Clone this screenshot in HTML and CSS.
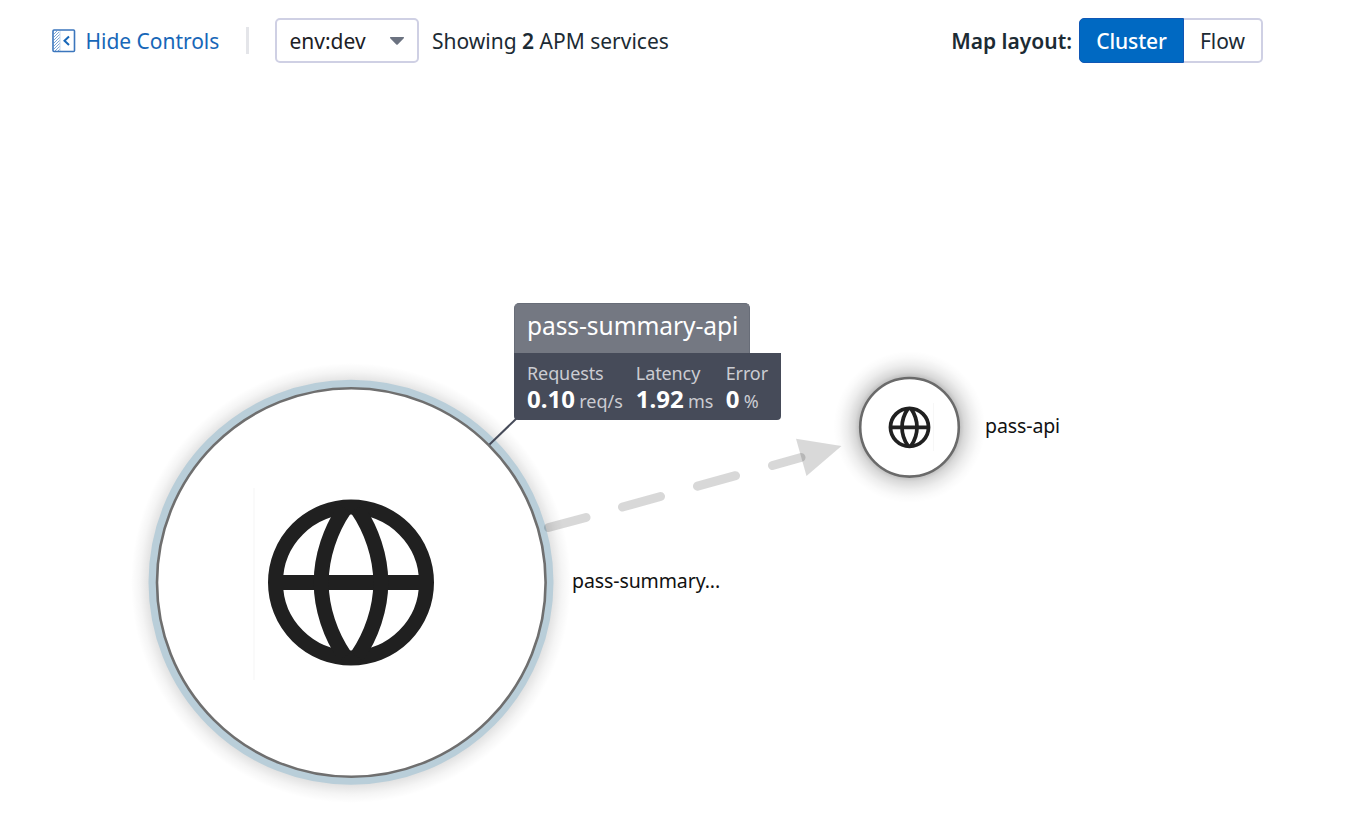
FILE: index.html
```html
<!DOCTYPE html>
<html lang="en">
<head>
<meta charset="utf-8">
<title>Service Map</title>
<link rel="stylesheet" href="styles.css">
</head>
<body>
<header class="toolbar">
  <a class="hide-controls">
    <svg class="panel-icon" width="24" height="24" viewBox="0 0 24 24" fill="none" stroke="#3b76bd">
      <path d="M2 5L5 2M2 8L7 3M2 11L7.500 5.500M2 14L7.500 8.500M2 17L7.500 11.500M2 20L7.500 14.500M3 22L7.500 17.500M6 22L7.500 20.500" stroke-width="1" opacity=".65"/>
      <rect x="1" y="1" width="21.500" height="21.500" rx="1" stroke-width="1.600"/>
      <path d="M8 1.500V22" stroke-width="1" opacity=".3"/>
      <path d="M17 7.500L12.500 11.800L17 16" stroke="#1767b8" stroke-width="2"/>
    </svg>
    <span class="hide-label">Hide Controls</span>
  </a>
  <span class="divider"></span>
  <div class="env-select"><span>env:dev</span><svg width="16" height="10" viewBox="0 0 16 10"><path d="M1.500 1H14.500Q15.500 1.500 14.800 2.200L8.700 8.500Q8 9 7.300 8.500L1.200 2.200Q.5 1.500 1.500 1Z" fill="#6b7280"/></svg></div>
  <span class="summary">Showing <b>2</b> APM services</span>
  <div class="layout-control">
    <span class="layout-label">Map layout:</span>
    <div class="toggle"><span class="option active">Cluster</span><span class="option flow">Flow</span></div>
  </div>
</header>
<main class="map">
  <svg class="graph" width="1362" height="737" viewBox="0 81 1362 737">
    <defs>
      <radialGradient id="bigShadow" gradientUnits="userSpaceOnUse" cx="351" cy="583" r="220">
        <stop offset=".87" stop-color="#000" stop-opacity=".18"/>
        <stop offset=".92" stop-color="#000" stop-opacity=".11"/>
        <stop offset=".96" stop-color="#000" stop-opacity=".04"/>
        <stop offset="1" stop-color="#000" stop-opacity="0"/>
      </radialGradient>
      <radialGradient id="smallShadow" gradientUnits="userSpaceOnUse" cx="909.500" cy="427" r="76">
        <stop offset=".64" stop-color="#000" stop-opacity=".28"/>
        <stop offset=".72" stop-color="#000" stop-opacity=".15"/>
        <stop offset=".82" stop-color="#000" stop-opacity=".07"/>
        <stop offset=".92" stop-color="#000" stop-opacity=".02"/>
        <stop offset="1" stop-color="#000" stop-opacity="0"/>
      </radialGradient>
      <g id="globe" fill="none" stroke="#202020" stroke-width="15">
        <circle r="75.500"/>
        <path d="M-75 0H75"/>
        <path d="M-6 -74C-20.500 -53 -29.800 -26 -29.800 0S-20.500 53 -6 74M6 -74C20.500 -53 29.800 -26 29.800 0S20.500 53 6 74"/>
      </g>
    </defs>
    <circle cx="351" cy="583" r="220" fill="url(#bigShadow)"/>
    <circle cx="351" cy="582.300" r="198.500" fill="#fff" stroke="#b9ced9" stroke-width="8"/>
    <circle cx="351.300" cy="582.500" r="194.300" fill="#fff" stroke="#6f6f6f" stroke-width="2.600"/>
    <path d="M254 488V680" stroke="#f5f5f5" stroke-width="1"/>
    <use href="#globe" transform="translate(351 582.500)"/>
    <circle cx="909.500" cy="427" r="76" fill="url(#smallShadow)"/>
    <circle cx="909.500" cy="427.300" r="49.300" fill="#fff" stroke="#6a6a6a" stroke-width="2.600"/>
    <path d="M933.500 403V451" stroke="#f7f7f7"/>
    <use href="#globe" transform="translate(909.500 427.300) scale(.252)"/>
    <g opacity=".15" stroke="#000" stroke-width="9" stroke-linecap="round">
      <path d="M548.500 527.500L586 517.500M622.500 507L660.500 496.500M697.500 486.200L735.500 475.700M772.500 465.500L801 457.500"/>
    </g>
    <path d="M796 438.700L841.500 446L806.500 476Z" fill="#000" opacity=".15"/>
    <path d="M489.500 444.500L517 418" stroke="#464b59" stroke-width="2"/>
  </svg>
  <span class="node-label summary-node">pass-summary...</span>
  <span class="node-label api-node">pass-api</span>
  <section class="tooltip">
    <h2 class="tooltip-title">pass-summary-api</h2>
    <div class="metrics">
      <div class="metric requests"><span class="metric-name">Requests</span><span class="metric-value"><b>0.10</b> req/s</span></div>
      <div class="metric latency"><span class="metric-name">Latency</span><span class="metric-value"><b>1.92</b> ms</span></div>
      <div class="metric"><span class="metric-name">Error</span><span class="metric-value"><b>0</b> %</span></div>
    </div>
  </section>
</main>
</body>
</html>
```
FILE: styles.css
```css
* { box-sizing: border-box; }
body { margin: 0; background: #fff; color: #1c2b34; font: 21px/28px "Noto Sans", sans-serif; overflow: hidden; }
.toolbar { display: flex; align-items: center; height: 81px; padding: 0 99px 0 51.500px; white-space: nowrap; }
.hide-controls { display: flex; align-items: center; gap: 10px; width: 194.500px; color: #1767b8; }
.hide-label { letter-spacing: -.03px; }
.panel-icon, .graph { display: block; flex: none; }
.divider { width: 3px; height: 27px; background: #e4e5e9; margin-right: 26px; }
.env-select { display: flex; align-items: center; justify-content: space-between; width: 144px; height: 45px; padding: 0 12px 0 12.500px; border: 2px solid #cfd0e4; border-radius: 5px; margin-right: 13px; color: #1c2025; }
.summary b { font-weight: 600; }
.layout-control { display: flex; align-items: center; gap: 7px; margin-left: auto; }
.layout-label { font-weight: 600; }
.toggle { display: flex; width: 184px; height: 45px; }
.option { display: flex; align-items: center; justify-content: center; width: 79px; border: 2px solid #cfd0e4; border-left: 0; border-radius: 0 5px 5px 0; }
.active { width: 105px; background: #0069c2; border: 1px solid #1057b5; border-radius: 5px 0 0 5px; color: #fff; font-weight: 500; letter-spacing: -.1px; }
.map { position: relative; height: 737px; }
.node-label { position: absolute; color: #111; font-size: 19.500px; letter-spacing: -.1px; white-space: nowrap; }
.summary-node { left: 572px; top: 486px; }
.api-node { left: 985px; top: 331px; }
.tooltip { position: absolute; left: 514px; top: 221.500px; width: 267px; color: #fff; white-space: nowrap; }
.tooltip-title { width: 236px; height: 50px; margin: 0; padding: 6px 0 0 12px; border: 1px solid #686d78; border-bottom: 0; border-radius: 5px 5px 0 0; background: #747882; font-size: 24.500px; line-height: 31px; font-weight: 400; letter-spacing: -.06px; }
.metrics { display: flex; height: 67.500px; padding: 8px 13px 0; border-radius: 0 0 4px 4px; background: #464b59; }
.metric { display: flex; flex-direction: column; }
.requests { width: 109px; }
.latency { width: 90px; }
.metric-name { color: #cbccd2; font-size: 18px; line-height: 25px; letter-spacing: -.1px; }
.metric-value { color: #cbccd2; font-size: 18px; line-height: 26px; word-spacing: -.4px; }
.metric-value b { color: #fff; font-size: 24px; font-weight: 700; }
```
